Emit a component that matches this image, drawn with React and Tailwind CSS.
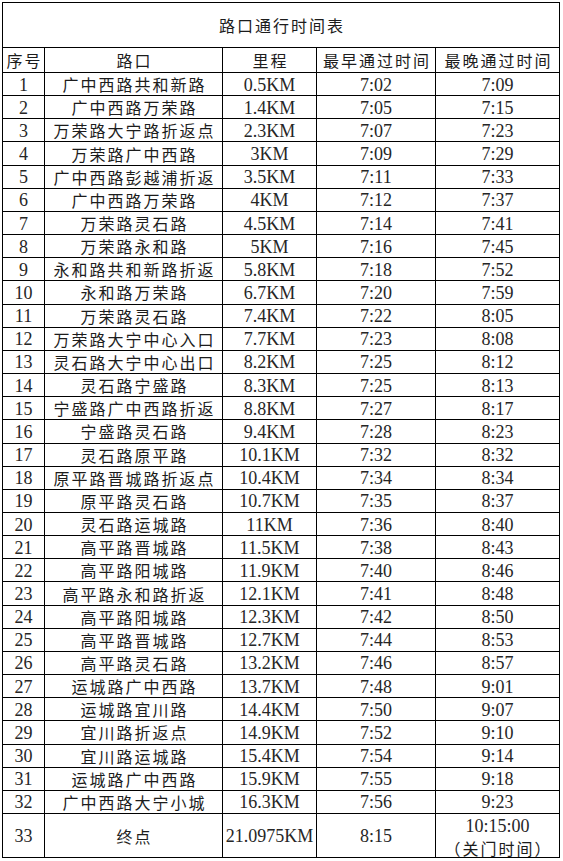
import React from 'react';

const rows = [
    ['1', '广中西路共和新路', '0.5KM', '7:02', '7:09'],
    ['2', '广中西路万荣路', '1.4KM', '7:05', '7:15'],
    ['3', '万荣路大宁路折返点', '2.3KM', '7:07', '7:23'],
    ['4', '万荣路广中西路', '3KM', '7:09', '7:29'],
    ['5', '广中西路彭越浦折返', '3.5KM', '7:11', '7:33'],
    ['6', '广中西路万荣路', '4KM', '7:12', '7:37'],
    ['7', '万荣路灵石路', '4.5KM', '7:14', '7:41'],
    ['8', '万荣路永和路', '5KM', '7:16', '7:45'],
    ['9', '永和路共和新路折返', '5.8KM', '7:18', '7:52'],
    ['10', '永和路万荣路', '6.7KM', '7:20', '7:59'],
    ['11', '万荣路灵石路', '7.4KM', '7:22', '8:05'],
    ['12', '万荣路大宁中心入口', '7.7KM', '7:23', '8:08'],
    ['13', '灵石路大宁中心出口', '8.2KM', '7:25', '8:12'],
    ['14', '灵石路宁盛路', '8.3KM', '7:25', '8:13'],
    ['15', '宁盛路广中西路折返', '8.8KM', '7:27', '8:17'],
    ['16', '宁盛路灵石路', '9.4KM', '7:28', '8:23'],
    ['17', '灵石路原平路', '10.1KM', '7:32', '8:32'],
    ['18', '原平路晋城路折返点', '10.4KM', '7:34', '8:34'],
    ['19', '原平路灵石路', '10.7KM', '7:35', '8:37'],
    ['20', '灵石路运城路', '11KM', '7:36', '8:40'],
    ['21', '高平路晋城路', '11.5KM', '7:38', '8:43'],
    ['22', '高平路阳城路', '11.9KM', '7:40', '8:46'],
    ['23', '高平路永和路折返', '12.1KM', '7:41', '8:48'],
    ['24', '高平路阳城路', '12.3KM', '7:42', '8:50'],
    ['25', '高平路晋城路', '12.7KM', '7:44', '8:53'],
    ['26', '高平路灵石路', '13.2KM', '7:46', '8:57'],
    ['27', '运城路广中西路', '13.7KM', '7:48', '9:01'],
    ['28', '运城路宜川路', '14.4KM', '7:50', '9:07'],
    ['29', '宜川路折返点', '14.9KM', '7:52', '9:10'],
    ['30', '宜川路运城路', '15.4KM', '7:54', '9:14'],
    ['31', '运城路广中西路', '15.9KM', '7:55', '9:18'],
    ['32', '广中西路大宁小城', '16.3KM', '7:56', '9:23'],
];

const cell = 'bg-white flex items-center justify-center whitespace-nowrap';
const cjk = "font-['Noto_Sans_CJK_SC',sans-serif] text-[16px] tracking-[2px] pl-[2px] text-[#1c1c1c]";
const num = "font-['Liberation_Serif','Noto_Sans_CJK_SC',serif] text-[18px] pt-[2px] text-[#262626]";

const App = () => {
    return (
        <div className="w-[563px] h-[861px] bg-white pt-[2px] pl-[2px]">
            <div className="grid grid-cols-[41px_177px_93px_118px_123px] grid-rows-[44px_24px_repeat(32,22.16px)_43px] gap-px bg-black p-px w-fit">
                <div className={`${cell} ${cjk} col-span-5`}>路口通行时间表</div>

                <div className={`${cell} ${cjk}`}>序号</div>
                <div className={`${cell} ${cjk}`}>路口</div>
                <div className={`${cell} ${cjk}`}>里程</div>
                <div className={`${cell} ${cjk}`}>最早通过时间</div>
                <div className={`${cell} ${cjk}`}>最晚通过时间</div>

                {rows.map(([no, name, dist, early, late]) => (
                    <React.Fragment key={no}>
                        <div className={`${cell} ${num}`}>{no}</div>
                        <div className={`${cell} ${cjk}`}>{name}</div>
                        <div className={`${cell} ${num}`}>{dist}</div>
                        <div className={`${cell} ${num}`}>{early}</div>
                        <div className={`${cell} ${num}`}>{late}</div>
                    </React.Fragment>
                ))}

                <div className={`${cell} ${num}`}>33</div>
                <div className={`${cell} ${cjk}`}>终点</div>
                <div className={`${cell} ${num}`}>21.0975KM</div>
                <div className={`${cell} ${num}`}>8:15</div>
                <div className={`${cell} flex-col leading-[22px]`}>
                    <span className={num}>10:15:00</span>
                    <span className={cjk}>（关门时间）</span>
                </div>
            </div>
        </div>
    );
};

export default App;
